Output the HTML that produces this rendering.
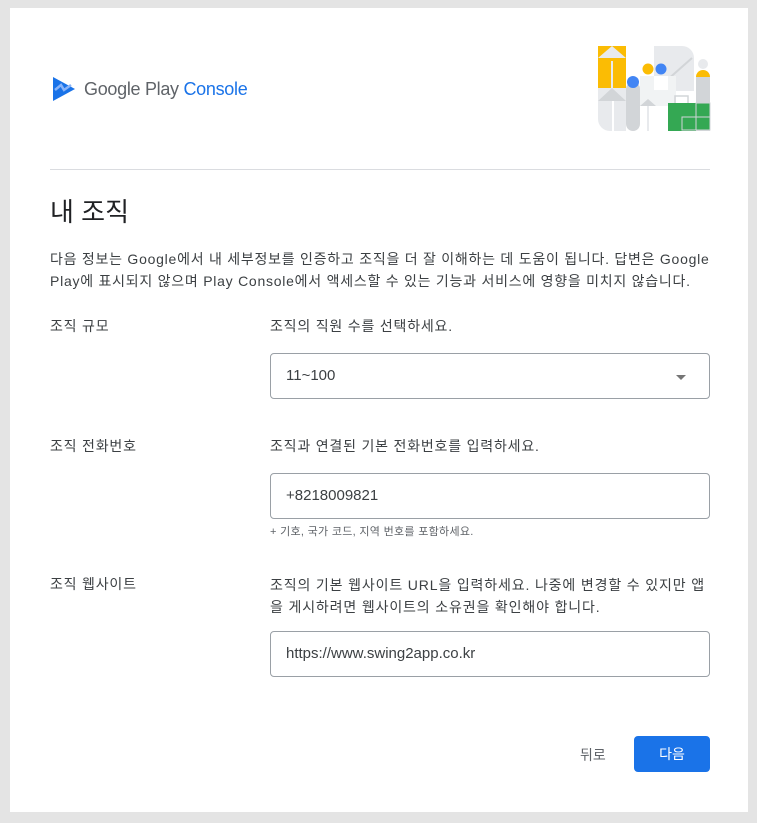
<!DOCTYPE html>
<html><head><meta charset="utf-8"><style>
*{margin:0;padding:0;box-sizing:border-box}
body{width:757px;height:823px;background:#e4e4e4;font-family:"Liberation Sans","Noto Sans CJK KR",sans-serif;position:relative;overflow:hidden;color:#3c4043}
.card{position:absolute;left:10px;top:8px;width:738px;height:804px;background:#fff}
.abs{position:absolute}
.lbl{position:absolute;font-size:14px;letter-spacing:0.8px;color:#3c4043;white-space:nowrap}
.inp{position:absolute;left:270px;width:440px;height:46px;border:1px solid #9aa0a6;border-radius:4px;font-size:15px;color:#3c4043;padding:13px 15px;line-height:18px}
</style></head><body>
<div class="card"></div>
<svg class="abs" style="left:52px;top:76px" width="24" height="26" viewBox="0 0 24 26"><path d="M1 1 L23 13 L1 25 Z" fill="#1a73e8"/><path d="M3 14 L9 9 L12 14 L19 9" stroke="#8ab4f8" stroke-width="2.5" fill="none"/></svg>
<div class="abs" style="left:84px;top:79px;font-size:18px;color:#5f6368;letter-spacing:-0.3px">Google Play <span style="color:#1a73e8">Console</span></div>
<svg class="abs" style="left:598px;top:46px" width="113" height="85" viewBox="0 0 113 85">
<path d="M56 0h28a12 12 0 0 1 12 12v33H56Z" fill="#e8eaed"/>
<line x1="68" y1="35" x2="94" y2="12" stroke="#d2d5d8" stroke-width="2"/>
<rect x="0" y="0" width="28" height="42" fill="#fbbc04"/>
<path d="M0 12L14 0L28 12Z" fill="#e8eaed"/>
<rect x="13" y="15" width="2" height="27" fill="#e8eaed"/>
<path d="M0 42h28v43H12A12 12 0 0 1 0 73Z" fill="#e8eaed"/>
<path d="M0 55L14 42L28 55Z" fill="#d2d5d8"/>
<rect x="14" y="55" width="2" height="30" fill="#fff"/>
<rect x="42" y="30" width="36" height="30" fill="#f1f3f4"/>
<rect x="56" y="30" width="14" height="14" fill="#fff"/>
<path d="M42 60L50 53L58 60Z" fill="#d2d5d8"/>
<rect x="49" y="60" width="2" height="25" fill="#e8eaed"/>
<rect x="28" y="36" width="14" height="49" rx="7" fill="#d2d5d8"/>
<circle cx="35" cy="36" r="6" fill="#4285f4"/>
<circle cx="50" cy="23" r="5.5" fill="#fbbc04"/>
<circle cx="63" cy="23" r="5.5" fill="#4285f4"/>
<circle cx="105" cy="18" r="5" fill="#e8eaed"/>
<path d="M98 31a7 7 0 0 1 14 0Z" fill="#fbbc04"/>
<rect x="98" y="31" width="14" height="54" fill="#d2d5d8"/>
<rect x="77" y="50" width="13" height="8" fill="none" stroke="#d2d5d8" stroke-width="1.5"/>
<rect x="70" y="57" width="28" height="28" fill="#34a853"/>
<rect x="98" y="57" width="14" height="14" fill="#34a853" stroke="#d2d5d8"/>
<rect x="98" y="71" width="14" height="13" fill="#34a853" stroke="#d2d5d8"/>
<rect x="84" y="71" width="14" height="13" fill="#34a853" stroke="#d2d5d8"/>
</svg>
<div class="abs" style="left:50px;top:169px;width:660px;height:1px;background:#dadce0"></div>
<div class="abs" style="left:50px;top:192px;font-size:26px;color:#202124">내 조직</div>
<div class="abs" style="left:50px;top:248px;width:700px;font-size:14px;line-height:22px;color:#3c4043;white-space:nowrap;letter-spacing:0.75px">다음 정보는 Google에서 내 세부정보를 인증하고 조직을 더 잘 이해하는 데 도움이 됩니다. 답변은 Google<br>Play에 표시되지 않으며 Play Console에서 액세스할 수 있는 기능과 서비스에 영향을 미치지 않습니다.</div>
<div class="lbl" style="left:50px;top:316px">조직 규모</div>
<div class="lbl" style="left:270px;top:316px">조직의 직원 수를 선택하세요.</div>
<div class="inp" style="top:353px">11~100</div>
<div class="abs" style="left:676px;top:375px;width:0;height:0;border-left:5px solid transparent;border-right:5px solid transparent;border-top:5px solid #757575"></div>
<div class="lbl" style="left:50px;top:436px">조직 전화번호</div>
<div class="lbl" style="left:270px;top:436px">조직과 연결된 기본 전화번호를 입력하세요.</div>
<div class="inp" style="top:473px">+8218009821</div>
<div class="abs" style="left:270px;top:523px;font-size:11px;color:#5f6368;letter-spacing:0.3px">+ 기호, 국가 코드, 지역 번호를 포함하세요.</div>
<div class="lbl" style="left:50px;top:574px">조직 웹사이트</div>
<div class="lbl" style="left:270px;top:574px;line-height:22px;letter-spacing:0.85px">조직의 기본 웹사이트 URL을 입력하세요. 나중에 변경할 수 있지만 앱<br>을 게시하려면 웹사이트의 소유권을 확인해야 합니다.</div>
<div class="inp" style="top:631px">https://www.swing2app.co.kr</div>
<div class="abs" style="left:580px;top:745px;font-size:14px;color:#5f6368">뒤로</div>
<div class="abs" style="left:634px;top:736px;width:76px;height:36px;background:#1a73e8;border-radius:4px;color:#fff;font-size:14px;text-align:center;line-height:36px">다음</div>
</body></html>
